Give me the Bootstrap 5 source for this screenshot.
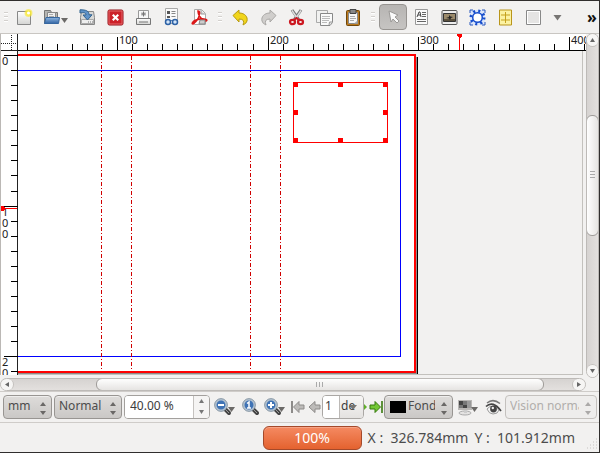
<!DOCTYPE html>
<html lang="fr">
<head>
<meta charset="utf-8">
<meta name="viewport" content="width=device-width, initial-scale=1">
<title>Document</title>
<link rel="stylesheet" href="https://cdn.jsdelivr.net/npm/bootstrap@5.3.0/dist/css/bootstrap.min.css">
<style>
body{font-family:"Noto Sans","Open Sans",sans-serif;font-size:12px;line-height:16px;color:#3c3c3c;background:#f2f1f0}
.shell{min-height:100vh;border:solid #302e2d;border-width:1px 1px 1px 0;overflow:hidden}
button{border:0;background:none;padding:0;color:inherit}
svg{display:block;flex-shrink:0}
.tools{height:33px;border-bottom:1px solid #c9c6c2;background:#f2f1f0}
.tool{width:28px;height:26px;display:flex;align-items:center;justify-content:center;flex-shrink:0}
.tool-first{width:27px}.tool-wide{width:35px}.tool-slim{width:21px}
.tool.on{border:1px solid #979491;border-radius:4px;background:linear-gradient(#b7b5b3,#c6c4c2)}
.grip{width:13px;flex-shrink:0;display:flex;flex-direction:column;gap:2px;align-items:center}
.grip-first{width:11px}
.grip i{width:4px;height:2px;background:#d3d0cd;border-bottom:1px solid #fff}
.more{font-size:16px;font-weight:700;color:#111;width:14px;line-height:20px}
.work{flex:1 1 auto;display:grid;grid-template-columns:18px minmax(0,1fr) 13px;grid-template-rows:17px minmax(0,1fr) 16px}
.work svg.fill{width:100%;height:100%;overflow:hidden}
.work>div{min-width:0;min-height:0}
.ruler{background:#fff}
.ruler text{font-size:11px;fill:#222}
.board{position:relative;border:solid #c3c1bd;border-width:0 1px 1px 0;margin-right:3px;overflow:hidden}
.board svg{position:absolute;inset:0}
.vscroll{grid-column:3;grid-row:1/3;display:flex;flex-direction:column;border:1px solid #bdbab7;border-radius:7px;background:linear-gradient(90deg,#d6d3d1,#e3e0de);overflow:hidden;margin:-1px 0 -3px}
.hscroll{grid-column:1/3;display:flex;height:13px;margin-top:3px;border:1px solid #bdbab7;border-radius:7px;background:linear-gradient(#d6d3d1,#e3e0de);overflow:hidden}
.endbtn{flex:0 0 13px;display:flex;align-items:center;justify-content:center;background:#f6f5f4}
.vscroll .endbtn:first-child{border-bottom:1px solid #c3c0bd;border-radius:0 0 6px 6px}
.vscroll .endbtn:last-child{border-top:1px solid #c3c0bd;border-radius:6px 6px 0 0}
.hscroll .endbtn:first-child{border-right:1px solid #c3c0bd;border-radius:0 6px 6px 0}
.hscroll .endbtn:last-child{border-left:1px solid #c3c0bd;border-radius:6px 0 0 6px}
.track{flex:1 1 0;display:flex}
.thumb{border:1px solid #9f9c99;border-radius:6px;background:linear-gradient(#fefefe,#e6e4e2);display:flex;align-items:center;justify-content:center}
.vscroll .thumb{background:linear-gradient(90deg,#fefefe,#e6e4e2);margin:0 -1px}
.hscroll .thumb{margin:-1px 0}
.controls{height:32px;border:solid #cfccc9;border-width:1px 0;padding-left:3px;padding-right:2px;padding-bottom:1px}
.combo{position:relative;height:24px;flex-shrink:0}
.gap-after{margin-right:2px}
.combo select{appearance:none;width:100%;height:100%;border:1px solid #989592;border-radius:4px;background:linear-gradient(#dedcda,#cac8c6);box-shadow:inset 0 1px #efeeed;padding:0 17px 1px 4px;color:#4c4c4c;font-size:12px;text-overflow:clip}
.combo svg{position:absolute;right:5px;top:7px;pointer-events:none}
.combo select:disabled{background:#eeedec;border-color:#c4c1be;color:#b1aeab;opacity:1}
.w-unit{width:49px}.w-quality{width:68px}.w-layer{width:69px}.w-vision{width:92px}
.combo.w-layer select{padding-left:23px}
.swatch{position:absolute;left:6px;top:6px;width:16px;height:12px;background:#000}
.spin{width:86px;height:24px;border:1px solid #a3a09d;border-radius:4px;background:#fff;display:flex;overflow:hidden;flex-shrink:0}
.spin input{flex:1 1 0;min-width:0;border:0;padding:0 0 1px 5px;color:#3c3c3c;background:#fff}
.steps{width:16px;border-left:1px solid #c5c2bf;background:#f5f4f3;display:flex;flex-direction:column}
.steps button{flex:1;display:flex;align-items:center;justify-content:center}
.act{height:24px;display:flex;align-items:center;justify-content:center;flex-shrink:0}
.a16{width:16px}.a24{width:24px}.a28{width:28px}
.pager{width:42px;height:24px;border:1px solid #aaa7a4;border-radius:4px;display:flex;overflow:hidden;flex-shrink:0;background:#fff}
.pager input{width:16px;border:0;padding:0 0 1px 2px;color:#3c3c3c}
.pager button{flex:1;position:relative;border-left:1px solid #bcb9b6;background:linear-gradient(#f7f6f5,#e4e2e0);text-align:left;padding:0 0 1px 1px}
.pager svg{position:absolute;left:9px;top:9px}
.foot{height:29px;gap:6px;font-size:14px;color:#4c4c4c;padding-right:24px;position:relative;white-space:pre}
.meter{width:99px;height:24px;border:1px solid #a4492a;border-radius:6px;background:linear-gradient(#f58a62,#e4622f);box-shadow:inset 0 1px #f7a486}
.meter .progress-bar{background:transparent;font-size:14px}
.sizer{position:absolute;right:1px;bottom:2px}
</style>
<script src="https://cdn.jsdelivr.net/npm/bootstrap@5.3.0/dist/js/bootstrap.bundle.min.js"></script>
</head>
<body>
<svg width="0" height="0" class="position-absolute" aria-hidden="true">
<defs>
<linearGradient id="gray" x2="0" y2="1"><stop stop-color="#fff"/><stop offset="1" stop-color="#d4d4d2"/></linearGradient>
<linearGradient id="blue" x2="0" y2="1"><stop stop-color="#8db5e0"/><stop offset="1" stop-color="#3465a4"/></linearGradient>
<radialGradient id="sun"><stop stop-color="#fffde0"/><stop offset=".4" stop-color="#fcee3c"/><stop offset="1" stop-color="#f7e52a" stop-opacity=".5"/></radialGradient>
<symbol id="lens" viewBox="0 0 21 18"><path d="m10 10 5 5" stroke="#444" stroke-width="4" stroke-linecap="round"/><path d="m11 11 4 4" stroke="#999" stroke-width="1"/><circle cx="7" cy="7" r="5.5" fill="#3f73b5" stroke="#b5c3d1" stroke-width="2"/><circle cx="7" cy="7" r="6.400" fill="none" stroke="#6f7f8f" stroke-width=".7"/></symbol>
</defs>
</svg>
<main class="shell d-flex flex-column">
<div class="tools d-flex align-items-center" role="toolbar" aria-label="Outils">
<span class="grip grip-first"><i></i><i></i><i></i></span>
<button class="tool tool-first" aria-label="Nouveau"><svg width="17" height="17" viewBox="0 0 17 17"><path d="M1.500 2.500h13v13h-13z" fill="url(#gray)" stroke="#888"/><circle cx="12.500" cy="4" r="4" fill="url(#sun)"/><circle cx="12.500" cy="4" r="1.500" fill="#fff"/></svg></button>
<button class="tool tool-wide" aria-label="Ouvrir"><svg width="25" height="17" viewBox="0 0 25 17"><path d="M1.500 14.500v-13h6l1 2h6v11z" fill="#b5b5b2" stroke="#777"/><path d="M4.500 3.500h8v7h-8z" fill="#eee" stroke="#888"/><path d="M6 5.500h4M6 7.500h5" stroke="#aaa"/><path d="m1.500 14.500 1.500-6h13.500l-1 6z" fill="url(#blue)" stroke="#3667a0"/><path d="M18 9h7l-3.500 5z" fill="#6b6967"/></svg></button>
<button class="tool" aria-label="Enregistrer"><svg width="17" height="17" viewBox="0 0 17 17"><path d="m1.500 8.500 1-6h12l1 6v7h-14z" fill="#d8d8d6" stroke="#888"/><path d="M2.500 10.500h12v4h-12z" fill="#eee" stroke="#aaa"/><path d="M9 13h1m1 0h1m1 0h1" stroke="#777"/><path d="M1 .8c6 0 9 1 9 5h3L8.500 11 4 6h3c0-2-1.500-3-6-2z" fill="#6093c9" stroke="#31628f"/></svg></button>
<button class="tool" aria-label="Fermer"><svg width="17" height="17" viewBox="0 0 17 17"><rect x="1" y="1" width="15" height="15" rx="1.500" fill="#cc2028" stroke="#900d15"/><rect x="2" y="2" width="13" height="13" fill="none" stroke="#e4686b"/><path d="M5 6.500 6.500 5l2 2 2-2L12 6.500l-2 2 2 2-1.500 1.500-2-2-2 2L5 10.500l2-2z" fill="#fff"/></svg></button>
<button class="tool" aria-label="Imprimer"><svg width="17" height="17" viewBox="0 0 17 17"><path d="M3.500 1.500h10v8h-10z" fill="#f8f8f8" stroke="#999"/><path d="M8.500 2.500v5M6 5h5M7 3.500l3 3m0-3-3 3" stroke="#777"/><path d="M1.500 9.500h14v6h-14z" fill="url(#gray)" stroke="#777"/><path d="M3 9.500h11M4 13h9" stroke="#777"/></svg></button>
<button class="tool" aria-label="Vérifier"><svg width="17" height="18" viewBox="0 0 17 18"><path d="M2.500.5h12v15h-12z" fill="#fafafa" stroke="#aaa"/><path d="M4 3h3v3H4zM4 8h3v2H4z" fill="#555"/><path d="M8.500 3.500h4m-4 2h4m-4 3h4" stroke="#888"/><path d="M6 13.500q2.500-2 5 0" stroke="#2e5c98" fill="none"/><circle cx="5" cy="14" r="2.500" fill="#d3e4f7" stroke="#2e62a6" stroke-width="1.500"/><circle cx="12" cy="14" r="2.500" fill="#d3e4f7" stroke="#2e62a6" stroke-width="1.500"/></svg></button>
<button class="tool" aria-label="Exporter en PDF"><svg width="17" height="17" viewBox="0 0 17 17"><path d="M3.500.5h7l4 4v11h-11z" fill="#fff" stroke="#aaa"/><path d="M10 1v4h4" fill="#ddd" stroke="#999"/><path d="M7 2q2 0 1.500 3C8 9 5 13 2 15c-2 0 0-3 3-4s7-1.500 10-.5c2 1 0 2-2 1C10 10 7 6 7 2Z" fill="none" stroke="#dc1717" stroke-width="1.600"/><path d="M9 11h5v4H8z" fill="#ccc" stroke="#888"/></svg></button>
<span class="grip"><i></i><i></i><i></i></span>
<button class="tool" aria-label="Annuler"><svg width="17" height="17" viewBox="0 0 17 17"><path d="M1 6.500 7 1v3c6 0 9 4 8 8q-.5 2.500-4 4 2.500-6-4-6v3z" fill="#f1d51c" stroke="#b79a0d"/></svg></button>
<button class="tool" aria-label="Rétablir"><svg width="17" height="17" viewBox="0 0 17 17"><path d="M16 6.500 10 1v3C4 4 1 8 2 12q.5 2.500 4 4-2.500-6 4-6v3z" fill="#d0cecc" stroke="#aaa8a6"/></svg></button>
<button class="tool" aria-label="Couper"><svg width="17" height="17" viewBox="0 0 17 17"><path d="m4 1 7 10M13 1 6 11" stroke="#777" stroke-width="3"/><path d="m4 1.500 6 9M13 1.500l-6 9" stroke="#ddd" stroke-width="1.400"/><ellipse cx="4.500" cy="13" rx="2.500" ry="2.200" fill="none" stroke="#cc1720" stroke-width="2.200"/><ellipse cx="12.500" cy="13" rx="2.500" ry="2.200" fill="none" stroke="#cc1720" stroke-width="2.200"/><path d="m6 11 2.500-2L11 11" stroke="#cc1720" stroke-width="2" fill="none"/></svg></button>
<button class="tool" aria-label="Copier"><svg width="17" height="17" viewBox="0 0 17 17"><path d="M.5 1.500h11v12H.5z" fill="#f1f1f0" stroke="#aaa"/><path d="M4.500 4.500h12v9l-2.500 3H4.500z" fill="#fafafa" stroke="#888"/><path d="M6 7.500h8m-8 2h8m-8 2h7M6 13.500h5" stroke="#bbb"/><path d="m13 16 .5-3h3" fill="#ddd" stroke="#999"/></svg></button>
<button class="tool" aria-label="Coller"><svg width="17" height="17" viewBox="0 0 17 17"><rect x="2.500" y="1.500" width="13" height="15" rx="1" fill="#b9781d" stroke="#704609"/><path d="M4.500 3.500h9v11h-9z" fill="#f7f7f6" stroke="#888"/><path d="M6 .5h6v4H6z" fill="#888" stroke="#444"/><path d="M6 7.500h5m-5 2h6m-6 2h4" stroke="#aaa"/><path d="m10 14.500 3.500-3v3z" fill="#aaa"/></svg></button>
<span class="grip"><i></i><i></i><i></i></span>
<button class="tool on" aria-label="Sélection" aria-pressed="true"><svg width="15" height="16" viewBox="0 0 15 16"><path d="m3 2 9 4-3 2 4 4-2 2-4-4-2 3z" fill="#fafafa" stroke="#9b9997"/></svg></button>
<button class="tool" aria-label="Cadre de texte"><svg width="15" height="17" viewBox="0 0 15 17"><path d="M1.500.5h12v15h-12z" fill="#fafafa" stroke="#999"/><path d="m3 8 2-5h1l1 5M4 6h3" stroke="#444" fill="none"/><path d="M8 3.500h4m-4 2h4m-4 2h4m-9 3h9m-9 2h9" stroke="#666"/></svg></button>
<button class="tool" aria-label="Cadre d’image"><svg width="17" height="17" viewBox="0 0 17 17"><rect x="1" y="1.500" width="15" height="14" rx="1" fill="#eee" stroke="#555"/><path d="M2.500 4.500h12v8h-12z" fill="#9b8a6b" stroke="#333"/><path d="M3 10h11v2H3z" fill="#5b513e"/><path d="m5 9 3-1V6l1.500 1.500L12 8l-2 1-1 2-1-1.500z" fill="#222"/></svg></button>
<button class="tool" aria-label="Forme"><svg width="17" height="17" viewBox="0 0 17 17"><path d="M1 1h15v15H1z" fill="#dce6fa"/><circle cx="8.500" cy="8.500" r="6.500" fill="none" stroke="#164dcc" stroke-width="3" stroke-dasharray="2 3.100"/><circle cx="8.500" cy="8.500" r="4.800" fill="#fff" stroke="#164dcc" stroke-width="1.500"/><path d="M1 4V1h3m9 0h3v3M1 13v3h3m9 0h3v-3" stroke="#2857bd" fill="none"/></svg></button>
<button class="tool" aria-label="Tableau"><svg width="15" height="17" viewBox="0 0 15 17"><path d="M1.500 1h12v15h-12z" fill="#fcf2a2" stroke="#b9951a"/><path d="M7.500 3v11M3 6h9M3 11h9" stroke="#c5a11d"/></svg></button>
<button class="tool" aria-label="Rectangle"><svg width="17" height="17" viewBox="0 0 17 17"><path d="M1.500 1.500h14v14h-14z" fill="#fff" stroke="#888"/><path d="M3 3h11v11H3z" fill="#e5e4e3"/></svg></button>
<button class="tool tool-slim" aria-label="Choisir la forme"><svg width="9" height="7" viewBox="0 0 9 7"><path d="M.5 1h8l-4 5.500z" fill="#777573"/></svg></button>
<button class="more ms-auto" aria-label="Plus d’outils">»</button>
</div>

<section class="work" aria-label="Document">
<div class="ruler"><svg class="fill" shape-rendering="crispEdges"><path d="M.5 0v17" stroke="#bbb8b5"/><path d="M1 9.500h16M11.500 1v15" stroke="#222" stroke-dasharray="1 1"/><path d="M1 16.500h17M17.500 0v17" stroke="#222"/></svg></div>
<div class="ruler"><svg class="fill" id="hr" shape-rendering="crispEdges"><rect y="16" width="100%" height="1" fill="#000"/></svg></div>
<div class="ruler"><svg class="fill" id="vr" shape-rendering="crispEdges"><rect width="1" height="100%" fill="#bbb8b5"/><rect x="17" width="1" height="100%" fill="#222"/></svg></div>
<div class="board"><svg class="fill" shape-rendering="crispEdges"><g transform="translate(-18 -51)">
<path d="M18 57h399v317H18z" fill="#8d8b89"/><path d="M417.500 57v317" stroke="#000"/>
<path d="M0 55h415v317H0z" fill="#fff" stroke="#f00" stroke-width="2"/>
<path d="M0 70.500h400.500v286H0" fill="none" stroke="#00f"/>
<path d="M101.500 56v315M131.500 56v315M250.500 56v315M280.500 56v315" stroke="#d00000" stroke-dasharray="4 2 1 2"/>
<path d="M293.500 82.500h94v60h-94z" fill="#fff" stroke="#f00"/>
<path d="M293 82h5v5h-5zM338 82h5v5h-5zM383 82h5v5h-5zM293 110h5v5h-5zM383 110h5v5h-5zM293 138h5v5h-5zM338 138h5v5h-5zM383 138h5v5h-5z" fill="#f00"/>
</g></svg></div>
<div class="vscroll"><button class="endbtn" aria-label="Haut"><svg width="5" height="4"><path d="M0 4h5L2.500 0z" fill="#666"/></svg></button>
<div class="track flex-column"><div style="height:21.500%"></div><div class="thumb" style="height:38%"><svg width="5" height="8"><path d="M0 .5h5M0 3.500h5M0 6.500h5" stroke="#aaa"/></svg></div></div>
<button class="endbtn" aria-label="Bas"><svg width="5" height="4"><path d="M0 0h5L2.500 4z" fill="#666"/></svg></button></div>
<div class="hscroll"><button class="endbtn" aria-label="Gauche"><svg width="4" height="5"><path d="M4 0v5L0 2.500z" fill="#666"/></svg></button>
<div class="track"><div style="width:14.700%"></div><div class="thumb" style="width:80.300%"><svg width="8" height="5"><path d="M.5 0v5M3.500 0v5M6.500 0v5" stroke="#aaa"/></svg></div></div>
<button class="endbtn" aria-label="Droite"><svg width="4" height="5"><path d="M0 0v5l4-2.500z" fill="#666"/></svg></button></div>
</section>

<div class="controls d-flex align-items-center">
<div class="combo w-unit gap-after"><select aria-label="Unité"><option>mm</option></select><svg width="8" height="13" viewBox="0 0 8 13"><path d="M1 4 4 0 7 4ZM1 9 4 13 7 9Z" fill="#6a6866"/></svg></div>
<div class="combo w-quality gap-after"><select aria-label="Qualité"><option>Normal</option></select><svg width="8" height="13" viewBox="0 0 8 13"><path d="M1 4 4 0 7 4ZM1 9 4 13 7 9Z" fill="#6a6866"/></svg></div>
<div class="spin"><input type="text" value="40.00 %" aria-label="Zoom"><div class="steps"><button aria-label="Augmenter"><svg width="5" height="4"><path d="M0 4h5L2.500 0z" fill="#777"/></svg></button><button aria-label="Diminuer"><svg width="5" height="4"><path d="M0 0h5L2.500 4z" fill="#777"/></svg></button></div></div>
<button class="act a28" aria-label="Zoom arrière"><svg width="21" height="18"><use href="#lens" width="21" height="18"/><path d="M4 7h6" stroke="#fff" stroke-width="2"/><path d="M14 9h7l-3.500 5z" fill="#6b6967"/></svg></button>
<button class="act a24" aria-label="Zoom 100 %"><svg width="17" height="18" viewBox="0 0 17 18"><use href="#lens" width="21" height="18"/><path d="M5 5.500 7 4v6M5 10h4" stroke="#fff" stroke-width="1.500" fill="none"/></svg></button>
<button class="act a24" aria-label="Zoom avant"><svg width="21" height="18"><use href="#lens" width="21" height="18"/><path d="M4 7h6M7 4v6" stroke="#fff" stroke-width="2"/><path d="M14 9h7l-3.500 5z" fill="#6b6967"/></svg></button>
<button class="act a16 ms-1" aria-label="Première page"><svg width="14" height="14" viewBox="0 0 14 14"><path d="M1 1v12" stroke="#8d8b89" stroke-width="2"/><path d="M2.500 7 8 1.500V5h5v4H8v3.500Z" fill="#bdbbb9" stroke="#8d8b89"/></svg></button>
<button class="act a16" aria-label="Page précédente"><svg width="13" height="14" viewBox="0 0 13 14"><path d="M1 7 7 1.500V5h5v4H7v3.500Z" fill="#bdbbb9" stroke="#8d8b89"/></svg></button>
<div class="pager"><input type="text" value="1" aria-label="Page"><button aria-label="Choisir la page">de<svg width="9" height="6"><path d="M0 0h8L4 5z" fill="#777573"/></svg></button></div>
<button class="act" aria-label="Page suivante"><svg width="4" height="14"><path d="m0 4 3 3-3 3z" fill="#5fae28"/></svg></button>
<button class="act a16" aria-label="Dernière page"><svg width="14" height="14" viewBox="0 0 14 14"><path d="M13 1v12" stroke="#35790c" stroke-width="1.600"/><path d="M11.500 7 6 1.500V5H1v4h5v3.500Z" fill="#73c735" stroke="#35790c"/></svg></button>
<div class="combo w-layer"><select aria-label="Calque"><option>Fond de page</option></select><span class="swatch"></span><svg width="8" height="13" viewBox="0 0 8 13"><path d="M1 4 4 0 7 4ZM1 9 4 13 7 9Z" fill="#6a6866"/></svg></div>
<button class="act a28" aria-label="Aperçu"><svg width="21" height="18" viewBox="0 0 21 18"><ellipse cx="8" cy="15" rx="6" ry="2" fill="#e4e3e2" stroke="#aaa"/><path d="M7 11h3v4H7z" fill="#ccc"/><path d="M1 2h14v10H1z" fill="#b9b7b5"/><path d="M2 3h4v4H2zM6 7h4v3H6z" fill="#444"/><path d="M6 3h4v4H6zM2 7h4v3H2z" fill="#777"/><path d="M10 3h4v7h-4z" fill="#999"/><path d="M14 9h7l-3.500 5z" fill="#6b6967"/></svg></button>
<button class="act a24" aria-label="Mode aperçu"><svg width="17" height="16" viewBox="0 0 17 16"><path d="M2 4Q8-1 15 4.500" fill="none" stroke="#777" stroke-width="1.500"/><path d="M1 7.500Q8 1 16 12" fill="none" stroke="#444" stroke-width="1.700"/><path d="M2 10q5-6 12 1-1 4-6 4-4 0-6-5z" fill="#f4f4f4" stroke="#999"/><circle cx="8.500" cy="10" r="3.400" fill="#444"/><circle cx="7.800" cy="9" r="1.200" fill="#eee"/></svg></button>
<div class="combo w-vision"><select aria-label="Vision" disabled><option>Vision normale</option></select><svg opacity=".5" width="8" height="13" viewBox="0 0 8 13"><path d="M1 4 4 0 7 4ZM1 9 4 13 7 9Z" fill="#6a6866"/></svg></div>
</div>
<footer class="foot d-flex align-items-center justify-content-end"><div class="progress meter" role="progressbar" aria-label="Progression" aria-valuenow="100" aria-valuemin="0" aria-valuemax="100"><div class="progress-bar" style="width:100%">100%</div></div><span>X :  326.784mm</span><span>Y :  101.912mm</span>
<svg class="sizer" width="12" height="12"><path d="M10 1h1M7 4h4M4 7h7M1 10h10" stroke="#c5c2c0" stroke-dasharray="1 2"/></svg></footer>
</main>
<script>
const NS = 'http://www.w3.org/2000/svg';
function add(parent, name, attrs, text) {
  const el = document.createElementNS(NS, name);
  for (const k in attrs) el.setAttribute(k, attrs[k]);
  if (text !== undefined) el.textContent = text;
  parent.appendChild(el);
}
const hr = document.getElementById('hr'), vr = document.getElementById('vr');
const step = 15.06;
const hrWidth = hr.getBoundingClientRect().width, vrHeight = vr.getBoundingClientRect().height;
for (let n = -6; 99 + n * step < hrWidth; n++) {
  const x = Math.round(99 + n * step), major = n % 10 === 0;
  add(hr, 'rect', {x, y: major ? 3 : 10, width: 1, height: major ? 14 : 7, fill: '#000'});
  if (major) add(hr, 'text', {x: x + 2, y: 10}, 100 + n * 10);
}
for (let n = 0; 4 + n * step < vrHeight; n++) {
  const y = Math.round(4 + n * step), major = n % 10 === 0;
  add(vr, 'rect', {x: major ? 4 : 11, y, width: major ? 14 : 7, height: 1, fill: '#000'});
  if (major) String(n * 10).split('').forEach((c, i) => {
    if (y + i * 11 < vrHeight) add(vr, 'text', {x: 2, y: y + 10 + i * 11}, c);
  });
}
add(hr, 'path', {d: 'M439 0h5v2l-2 2v12h-1V4l-2-2z', fill: '#f00'});
add(vr, 'path', {d: 'M1 155h2l2 2h12v1H5l-2 2H1z', fill: '#f00'});
</script>
</body>
</html>
